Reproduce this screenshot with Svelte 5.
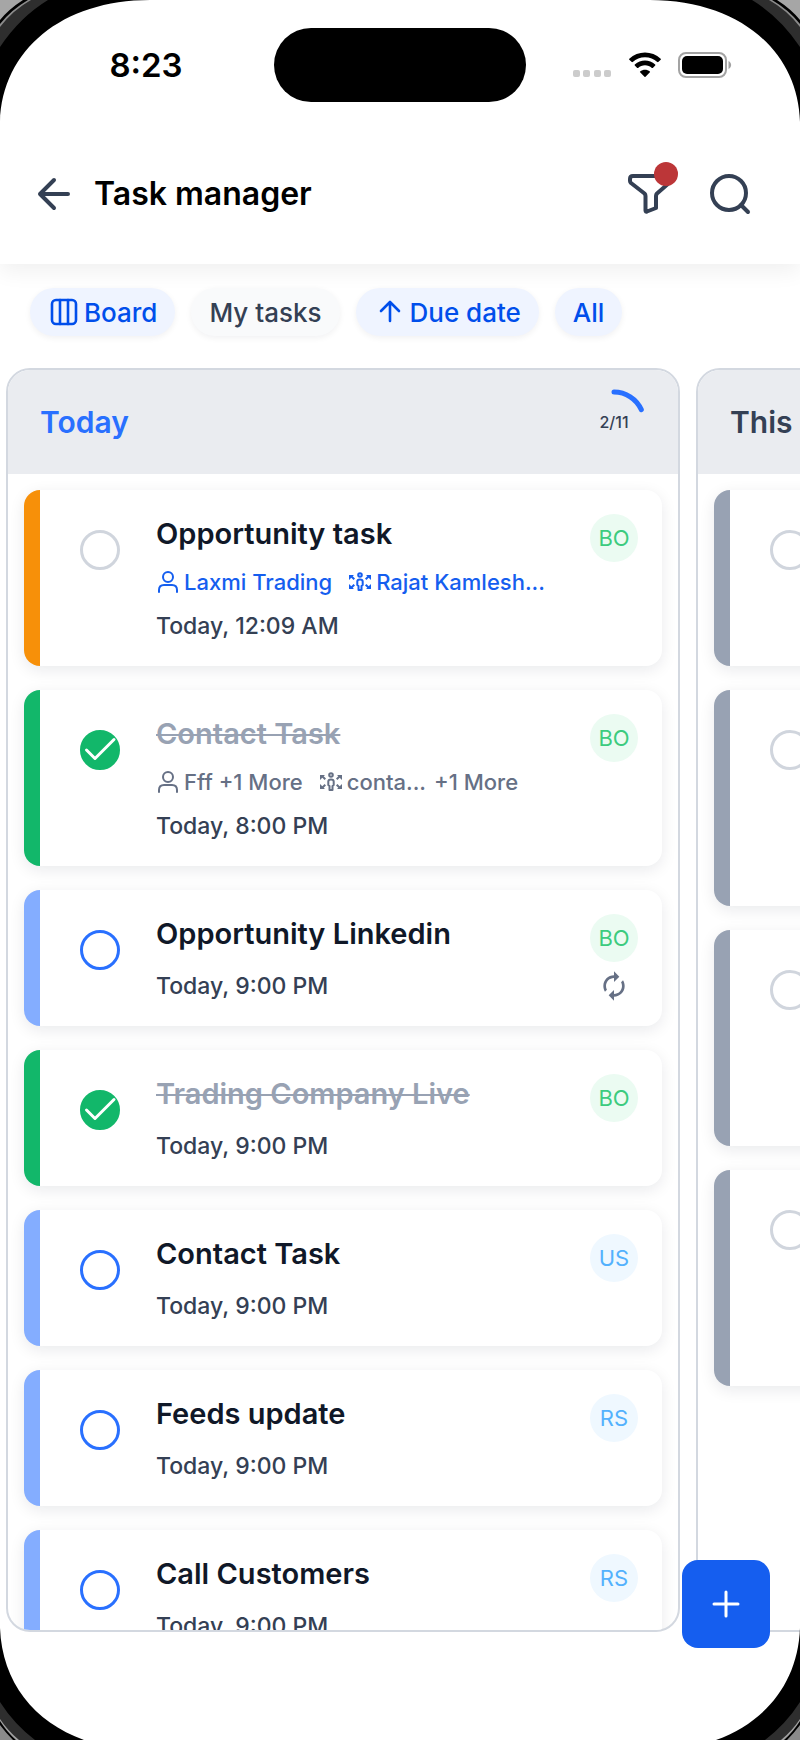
<script>
	const tasks = [
		{ id: 1, title: 'Opportunity task', due: 'Today, 12:09 AM', owner: 'BO', status: 'overdue', contact: 'Laxmi Trading', lead: 'Rajat Kamlesh...' },
		{ id: 2, title: 'Contact Task', due: 'Today, 8:00 PM', owner: 'BO', status: 'done', contact: 'Fff +1 More', lead: 'conta...', more: '+1 More' },
		{ id: 3, title: 'Opportunity Linkedin', due: 'Today, 9:00 PM', owner: 'BO', status: 'open', repeats: true },
		{ id: 4, title: 'Trading Company Live', due: 'Today, 9:00 PM', owner: 'BO', status: 'done' },
		{ id: 5, title: 'Contact Task', due: 'Today, 9:00 PM', owner: 'US', status: 'open' },
		{ id: 6, title: 'Feeds update', due: 'Today, 9:00 PM', owner: 'RS', status: 'open' },
		{ id: 7, title: 'Call Customers', due: 'Today, 9:00 PM', owner: 'RS', status: 'open' }
	];

	const upcoming = ['short', 'tall', 'tall', 'tall'];

	const done = 2;
	const total = 11;
	const ring = 2 * Math.PI * 30;
</script>

{#snippet checkbox(label, checked)}
	<label class="check">
		<input type="checkbox" aria-label={label} {checked} />
		<svg viewBox="0 0 40 40" aria-hidden="true"><path d="M6.5 20 15 28.5 34 9.5" /></svg>
	</label>
{/snippet}

{#snippet corner(place)}
	<svg class="corner {place}" viewBox="0 0 160 130" aria-hidden="true">
		{#if place.startsWith('top')}
			<path d="M0 0H150C62 0 2 50 0 122Z" fill="#000" />
			<path d="M0 0H48Q20 17 0 47Z" fill="#2e2e2e" />
			<path d="M0 0H31Q13 10 0 27Z" fill="#8c8c8c" />
			<path d="M0 0H28Q11 10 0 24Z" fill="#000" />
			<path d="M0 0H23Q9 9 0 20Z" fill="#a6a6a6" />
		{:else}
			<path d="M0 0H84C34 18 2 58 0 112Z" fill="#000" />
			<path d="M0 0H35Q14 16 0 38Z" fill="#2e2e2e" />
			<path d="M0 0H19Q8 9 0 21Z" fill="#a0a0a0" />
			<path d="M0 0H16Q7 8 0 19Z" fill="#000" />
			<path d="M0 0H13Q6 7 0 15Z" fill="#8a8a8a" />
		{/if}
	</svg>
{/snippet}

<div class="screen">
	<header>
		<div class="status">
			<time>8:23</time>
			<div class="island"></div>
			<div class="signals">
				<svg class="cell" viewBox="0 0 40 26" aria-hidden="true">
					<rect x="1" y="18" width="7" height="7" rx="2" />
					<rect x="11" y="18" width="7" height="7" rx="2" />
					<rect x="22" y="18" width="7" height="7" rx="2" />
					<rect x="32" y="18" width="7" height="7" rx="2" />
				</svg>
				<svg class="wifi" viewBox="0 0 34 26" aria-hidden="true">
					<path d="M17 5.2c4.7 0 9 1.8 12.3 4.9.3.2.7.2.9 0l2.5-2.4c.3-.3.3-.7 0-1C24.1-1.500 9.900-1.500 1.300 6.700c-.3.3-.3.7 0 1l2.500 2.400c.2.2.6.2.9 0C8 7 12.300 5.200 17 5.200z" />
					<path d="M17 13.300c2.600 0 5 .9 6.900 2.600.3.2.7.2.9 0l2.400-2.500c.3-.3.3-.7 0-1-5.800-5.300-14.600-5.300-20.400 0-.3.3-.3.7 0 1l2.400 2.500c.2.2.6.2.9 0 1.900-1.700 4.300-2.600 6.900-2.600z" />
					<path d="M21.900 18.300c.3-.2.3-.7 0-.9-2.800-2.300-7-2.300-9.800 0-.3.2-.3.7 0 .9l4.400 4.500c.3.3.7.3 1 0z" transform="translate(0 2)" />
				</svg>
				<svg class="battery" viewBox="0 0 54 26" aria-hidden="true">
					<rect x="1" y="1" width="47" height="24" rx="7" fill="none" stroke="#a3a3a3" stroke-width="2" />
					<rect x="4" y="4" width="41" height="18" rx="5" />
					<path d="M50.500 9v8c3.500-1.500 3.500-6.500 0-8z" fill="#a3a3a3" />
				</svg>
			</div>
		</div>

		<div class="appbar">
			<button class="icon" aria-label="Back">
				<svg viewBox="0 0 48 48"><path d="M38 24H10M24 38 10 24 24 10" /></svg>
			</button>
			<h1>Task manager</h1>
			<button class="icon filter" aria-label="Filter">
				<svg viewBox="0 0 48 48">
					<path d="M7 6H41Q44 6 44 9V11Q44 12 43 13L31 23.500Q30 24.500 30 26V38L21 41.500Q19.500 42 19.500 40.500V26Q19.500 24.500 18.500 23.500L5 13Q4 12 4 11V9Q4 6 7 6Z" />
				</svg>
				<span class="dot"></span>
			</button>
			<button class="icon" aria-label="Search">
				<svg viewBox="0 0 48 48"><circle cx="23" cy="23" r="17" /><path d="M35 35 42 42" /></svg>
			</button>
		</div>
	</header>

	<nav class="chips" aria-label="View options">
		<button class="chip active">
			<svg viewBox="0 0 32 32"><rect x="4" y="4" width="24" height="24" rx="4" /><path d="M12 4V28M20 4V28" /></svg>
			Board
		</button>
		<button class="chip">My tasks</button>
		<button class="chip active">
			<svg viewBox="0 0 32 32"><path d="M16 25V6M7 15 16 6 25 15" /></svg>
			Due date
		</button>
		<button class="chip active">All</button>
	</nav>

	<main class="board">
		<section class="column">
			<div class="column-head">
				<h2 class="current">Today</h2>
				<div class="progress">
					<svg viewBox="0 0 64 64" aria-hidden="true">
						<circle cx="32" cy="32" r="30" transform="rotate(-90 32 32)" stroke-dasharray="{(ring * done) / total} {ring}" />
					</svg>
					<span>{done}/{total}</span>
				</div>
			</div>
			<div class="cards">
				{#each tasks as task (task.id)}
					<article class="card {task.status}" class:linked={task.contact}>
						{@render checkbox(task.title, task.status === 'done')}
						<div class="body">
							<h3>{task.title}</h3>
							{#if task.contact}
								<div class="links">
									<a href="#contact">
										<svg viewBox="0 0 24 24"><circle cx="12" cy="7" r="5" /><path d="M3 22V20Q3 15 8 15H16Q21 15 21 20V22" /></svg>
										{task.contact}
									</a>
									<a href="#lead">
										<svg viewBox="0 0 24 24">
											<circle cx="12" cy="5" r="1.800" />
											<path d="M10.500 20V16L9.300 15V11.500Q9.300 9.500 12 9.500T14.700 11.500V15L13.500 16V20Z" />
											<path class="arrows" d="M1 5H6L4.700 6.300 7 8.600 5.600 10 3.300 7.700 1 10ZM23 5H18L19.300 6.300 17 8.600 18.400 10 20.700 7.700 23 10ZM1 19H6L4.700 17.700 7 15.400 5.600 14 3.300 16.300 1 14ZM23 19H18L19.300 17.700 17 15.400 18.400 14 20.700 16.300 23 14Z" />
										</svg>
										{task.lead}
										{#if task.more}<span>{task.more}</span>{/if}
									</a>
								</div>
							{/if}
							<p>{task.due}</p>
						</div>
						<div class="side">
							<span class="avatar" class:green={task.owner === 'BO'}>{task.owner}</span>
							{#if task.repeats}
								<svg viewBox="0 0 24 24" role="img" aria-label="Repeats">
									<path d="M12 6v3l4-4-4-4v3c-4.420 0-8 3.580-8 8 0 1.570.460 3.030 1.240 4.260L6.700 14.800A5.870 5.870 0 0 1 6 12c0-3.310 2.690-6 6-6zm6.760 1.740L17.300 9.200c.440.840.700 1.790.700 2.800 0 3.310-2.690 6-6 6v-3l-4 4 4 4v-3c4.420 0 8-3.580 8-8 0-1.570-.460-3.030-1.240-4.260z" />
								</svg>
							{/if}
						</div>
					</article>
				{/each}
			</div>
		</section>

		<section class="column">
			<div class="column-head">
				<h2>This week</h2>
			</div>
			<div class="cards">
				{#each upcoming as size}
					<article class="card later {size}">
						{@render checkbox('Upcoming task', false)}
					</article>
				{/each}
			</div>
		</section>
	</main>

	<button class="add" aria-label="Add task">
		<svg viewBox="0 0 32 32"><path d="M16 4V28M4 16H28" /></svg>
	</button>

	{@render corner('top left')}
	{@render corner('top right')}
	{@render corner('bottom left')}
	{@render corner('bottom right')}
</div>

<style>
	:global(body) {
		margin: 0;
		background: #fff;
	}

	.screen {
		position: relative;
		display: flex;
		flex-direction: column;
		height: 100vh;
		overflow: hidden;
		background: #fff;
		color: #344054;
		font-family: Inter, 'Liberation Sans', sans-serif;
		font-optical-sizing: none;
	}

	h1, h2, h3, p {
		margin: 0;
	}

	button {
		border: 0;
		padding: 0;
		background: none;
		color: inherit;
		font: inherit;
	}

	svg {
		display: block;
		flex: none;
	}

	header {
		box-shadow: 0 8px 20px rgba(0, 0, 0, 0.06);
	}

	.status {
		display: grid;
		grid-template-columns: 1fr 252px 1fr;
		place-items: center;
		padding: 28px 18px 22px;
	}

	.status time {
		color: #000;
		font-size: 33px;
		line-height: 40px;
		font-weight: 600;
	}

	.island {
		width: 100%;
		height: 74px;
		border-radius: 37px;
		background: #000;
	}

	.signals {
		display: flex;
		gap: 16px;
		padding-right: 4px;
	}

	.signals svg {
		height: 26px;
	}

	.cell {
		width: 40px;
		fill: #ccc;
	}

	.wifi {
		width: 34px;
	}

	.battery {
		width: 54px;
	}

	.appbar {
		display: flex;
		align-items: center;
		gap: 16px;
		height: 140px;
		padding: 0 46px 0 30px;
	}

	.appbar h1 {
		flex: 1;
		color: #000;
		font-size: 32px;
		line-height: 40px;
		font-weight: 600;
	}

	.icon {
		position: relative;
		width: 48px;
		height: 48px;
	}

	.icon svg {
		width: 48px;
		height: 48px;
		fill: none;
		stroke: #344054;
		stroke-width: 4;
		stroke-linecap: round;
		stroke-linejoin: round;
	}

	.filter {
		margin-right: 16px;
	}

	.dot {
		position: absolute;
		top: -8px;
		right: -4px;
		width: 24px;
		height: 24px;
		border-radius: 50%;
		background: #bc3638;
	}

	.chips {
		display: flex;
		gap: 16px;
		padding: 24px 30px 32px;
	}

	.chip {
		display: flex;
		align-items: center;
		gap: 4px;
		height: 48px;
		padding: 0 18px;
		border-radius: 24px;
		background: #f9fafb;
		box-shadow: 0 2px 6px rgba(16, 24, 40, 0.06);
		font-size: 26px;
		font-weight: 500;
	}

	.chip.active {
		background: #eff4ff;
		color: #004eeb;
	}

	.chip svg {
		width: 32px;
		height: 32px;
		fill: none;
		stroke: currentColor;
		stroke-width: 2.6;
		stroke-linecap: round;
		stroke-linejoin: round;
	}

	.board {
		flex: 1;
		display: flex;
		gap: 16px;
		min-height: 0;
		padding: 0 0 108px 6px;
	}

	.column {
		flex: 0 0 calc(100% - 120px);
		display: flex;
		flex-direction: column;
		box-sizing: border-box;
		overflow: hidden;
		border: 2px solid #d3d8e0;
		border-radius: 24px;
	}

	.column-head {
		display: flex;
		flex: none;
		align-items: center;
		justify-content: space-between;
		height: 104px;
		padding: 0 32px;
		background: #eaecf0;
	}

	.column-head h2 {
		font-size: 30px;
		line-height: 40px;
		font-weight: 600;
	}

	.column-head .current {
		color: #2970ff;
	}

	.progress {
		display: grid;
		place-items: center;
	}

	.progress > * {
		grid-area: 1 / 1;
	}

	.progress svg {
		width: 64px;
		height: 64px;
		overflow: visible;
		fill: none;
		stroke: #2970ff;
		stroke-width: 5;
		stroke-linecap: round;
	}

	.progress span {
		font-size: 16px;
		font-weight: 500;
	}

	.cards {
		display: flex;
		flex-direction: column;
		gap: 24px;
		padding: 16px;
	}

	.card {
		display: flex;
		flex: none;
		align-items: flex-start;
		padding: 24px 24px 24px 40px;
		border-left: 16px solid #84adff;
		border-radius: 16px;
		background: #fff;
		box-shadow: 0 4px 16px rgba(16, 24, 40, 0.09);
	}

	.card.overdue {
		border-color: #f79009;
	}

	.card.done {
		border-color: #12b76a;
	}

	.card.later {
		border-color: #98a2b3;
	}

	.card.short {
		min-height: 128px;
	}

	.card.tall {
		min-height: 168px;
	}

	.check {
		display: grid;
		flex: none;
		margin: 16px 36px 0 0;
	}

	.check > * {
		grid-area: 1 / 1;
		width: 40px;
		height: 40px;
	}

	.check input {
		appearance: none;
		box-sizing: border-box;
		margin: 0;
		border: 3px solid #2970ff;
		border-radius: 50%;
	}

	.overdue input,
	.later input {
		border-color: #d0d5dd;
	}

	.check input:checked {
		border-color: #12b76a;
		background: #12b76a;
	}

	.check svg {
		visibility: hidden;
		pointer-events: none;
		fill: none;
		stroke: #fff;
		stroke-width: 3;
		stroke-linecap: round;
		stroke-linejoin: round;
	}

	.check input:checked + svg {
		visibility: visible;
	}

	.body {
		flex: 1;
		display: flex;
		flex-direction: column;
		gap: 16px;
		min-width: 0;
	}

	.linked .body {
		gap: 12px;
	}

	.body h3 {
		color: #101828;
		font-size: 29px;
		line-height: 40px;
		font-weight: 600;
	}

	.done h3 {
		color: #98a2b3;
		text-decoration: line-through;
		text-decoration-thickness: 2px;
	}

	.body p {
		font-size: 23px;
		line-height: 32px;
		font-weight: 500;
	}

	.links {
		display: flex;
		gap: 16px;
		white-space: nowrap;
	}

	.links a {
		display: flex;
		align-items: center;
		gap: 4px;
		color: #155eef;
		font-size: 22px;
		line-height: 32px;
		font-weight: 500;
		text-decoration: none;
	}

	.done .links a {
		color: #667085;
	}

	.links span {
		margin-left: 4px;
	}

	.links svg {
		width: 24px;
		height: 24px;
		fill: none;
		stroke: currentColor;
		stroke-width: 2;
		stroke-linecap: round;
		stroke-linejoin: round;
	}

	.links .arrows {
		fill: currentColor;
		stroke: none;
	}

	.side {
		display: flex;
		flex-direction: column;
		align-items: center;
		gap: 8px;
	}

	.side svg {
		width: 32px;
		height: 32px;
		fill: #667085;
	}

	.avatar {
		display: grid;
		place-items: center;
		width: 48px;
		height: 48px;
		border-radius: 50%;
		background: #eff8ff;
		color: #53b1fd;
		font-size: 22px;
	}

	.avatar.green {
		background: #ebfbf2;
		color: #3ccb7f;
	}

	.add {
		position: absolute;
		right: 30px;
		bottom: 92px;
		display: grid;
		place-items: center;
		width: 88px;
		height: 88px;
		border-radius: 16px;
		background: #155eef;
	}

	.add svg {
		width: 32px;
		height: 32px;
		stroke: #fff;
		stroke-width: 3;
		stroke-linecap: round;
	}

	/* rounded bezel over the four corners of the display */
	.corner {
		position: absolute;
		width: 160px;
		height: 130px;
		pointer-events: none;
	}

	.top {
		top: 0;
	}

	.bottom {
		bottom: 0;
	}

	.left {
		left: 0;
	}

	.right {
		right: 0;
	}

	.top.right {
		transform: scaleX(-1);
	}

	.bottom.left {
		transform: scaleY(-1);
	}

	.bottom.right {
		transform: scale(-1);
	}
</style>
